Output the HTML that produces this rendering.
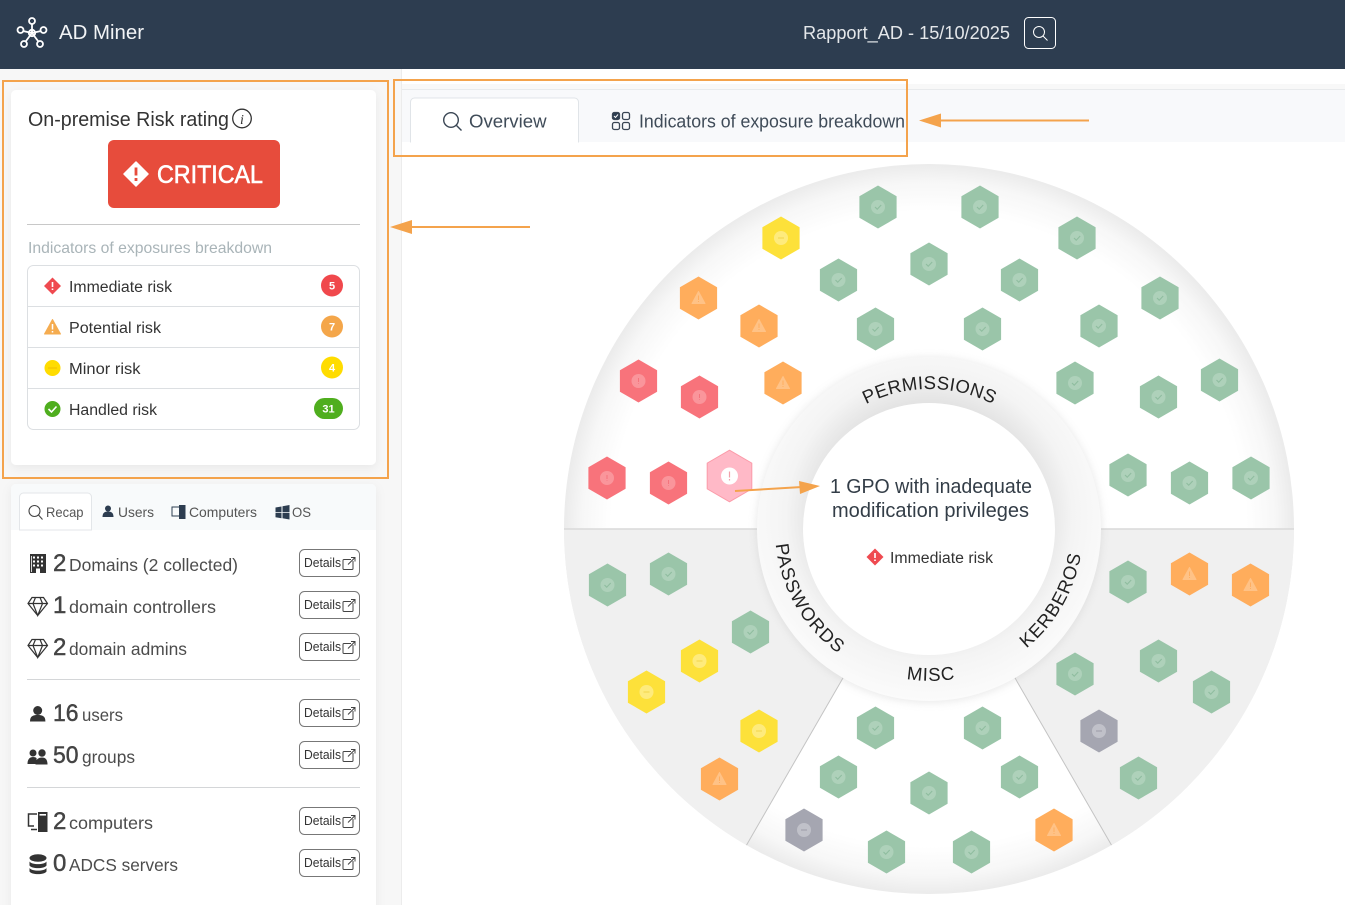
<!DOCTYPE html>
<html lang="en">
<head>
<meta charset="utf-8">
<title>AD Miner</title>
<style>
html,body{margin:0;padding:0;background:#fff;width:1345px;height:905px;overflow:hidden}
svg{display:block;position:absolute;left:0;top:0}
text{font-family:"Liberation Sans",sans-serif;fill:#333}
.lab{font-size:17.5px;fill:#4c4c4c}
.num{font-size:24px;fill:#444;stroke:#444;stroke-width:.45px}
.det{font-size:12.5px;fill:#333}
.row{font-size:15.5px;fill:#333}
.tab{font-size:14px;fill:#555}
.curve{font-size:18.5px;fill:#222}
.b{font-size:11px;font-weight:bold;fill:#fff}
</style>
</head>
<body>
<svg width="1345" height="905" viewBox="0 0 1345 905" xmlns="http://www.w3.org/2000/svg">
<defs>
<radialGradient id="disc" gradientUnits="userSpaceOnUse" cx="929" cy="529" r="365">
<stop offset="0" stop-color="#fff"/><stop offset=".87" stop-color="#fff"/><stop offset=".95" stop-color="#f7f7f7"/><stop offset="1" stop-color="#ebebeb"/>
</radialGradient>
<radialGradient id="ring" gradientUnits="userSpaceOnUse" cx="929" cy="517" r="184">
<stop offset=".61" stop-color="#e2e2e2"/><stop offset=".78" stop-color="#f4f4f4"/><stop offset="1" stop-color="#fbfbfb"/>
</radialGradient>
<filter id="soft" x="-20%" y="-20%" width="140%" height="140%"><feGaussianBlur stdDeviation="4"/></filter>
<filter id="cs" x="-10%" y="-10%" width="120%" height="120%"><feDropShadow dx="0" dy="3" stdDeviation="5" flood-color="#000" flood-opacity=".06"/></filter>
<polygon id="hx" points="0,-21.5 18.6,-10.75 18.6,10.75 0,21.5 -18.6,10.75 -18.6,-10.75"/>
<g id="hg"><use href="#hx" fill="#9ac5a9"/><circle r="7" fill="#aed1ba"/><path d="M-3,0l2.2,2.2L3.2,-2" fill="none" stroke="#8fbd9f" stroke-width="1.1"/></g>
<g id="hr"><use href="#hx" fill="#f8737b"/><circle r="7" fill="#fa959b"/><path d="M0,-3V1M0,2.4V3" stroke="#f4747d" stroke-width="1"/></g>
<g id="ho"><use href="#hx" fill="#ffad5c"/><path d="M0,-6.500L6.500,5.500H-6.500Z" fill="#ffc286" stroke="#ffc286" stroke-linejoin="round"/><path d="M0,-2.500V2M0,3V4" stroke="#ffae60" stroke-width="1"/></g>
<g id="hy"><use href="#hx" fill="#fde13a"/><circle r="7" fill="#feeb7d"/><path d="M-3,0H3" stroke="#f3d64a" stroke-width="1"/></g>
<g id="hk"><use href="#hx" fill="#a5a6b1"/><circle r="7" fill="#c0c1c9"/><path d="M-3,0H3" stroke="#9b9ca8" stroke-width="1"/></g>
<g id="ext" fill="none" stroke="#444" stroke-width="1"><path d="M353,561v7.500a1,1 0 0 1 -1,1h-8a1,1 0 0 1 -1,-1v-8a1,1 0 0 1 1,-1h7"/><path d="M348,564.500L355,557.500M351,557.500h4v4"/></g>
<path id="hp1" d="M789.500,529A140,140 0 0 1 1069.500,529"/>
<path id="hp2" d="M775,529A154,154 0 0 0 852,662.400"/>
<path id="hp3" d="M798,604A153.500,153.500 0 0 0 1064,604"/>
<path id="hp4" d="M1006,662.400A154,154 0 0 0 1083,529"/>
<path id="diam" d="M0,-8.500L8.500,0L0,8.500L-8.500,0Z"/>
</defs>

<!-- page backgrounds -->
<rect width="1345" height="905" fill="#fff"/>
<rect x="0" y="69" width="401" height="836" fill="#f7f7f7"/>
<rect x="401" y="69" width="1" height="836" fill="#ececec"/>
<rect x="402" y="89" width="943" height="53" fill="#f8f9fb"/>
<rect x="402" y="84" width="943" height="5" fill="#f8f8f8"/>
<rect x="402" y="89" width="943" height="1" fill="#e8eaec"/>

<!-- header -->
<rect width="1345" height="69" fill="#2d3d50"/>
<g fill="none" stroke="#fff" stroke-width="1.800">
<path d="M32,33V24M32,33L23,31M32,33L41,31M32,33L26,41M32,33L38,41"/>
<circle cx="32" cy="33" r="3.200" stroke-width="1.800"/>
<circle cx="32" cy="21" r="3"/><circle cx="20.500" cy="30" r="3"/><circle cx="43.500" cy="30" r="3"/><circle cx="24" cy="44" r="3"/><circle cx="40" cy="44" r="3"/>
</g>
<text x="59" y="39" font-size="20" textLength="85" lengthAdjust="spacingAndGlyphs" style="fill:#f2f4f6">AD Miner</text>
<text x="803" y="39" font-size="18" textLength="207" lengthAdjust="spacingAndGlyphs" style="fill:#e4e7ea">Rapport_AD - 15/10/2025</text>
<rect x="1024.500" y="17.500" width="31" height="31" rx="4" fill="none" stroke="#fff"/>
<g fill="none" stroke="#fff" stroke-width="1"><circle cx="1039" cy="32" r="5.500"/><path d="M1043,36l4.500,4.500"/></g>

<!-- left risk card -->
<rect x="11" y="90" width="365" height="375" rx="5" fill="#fff" filter="url(#cs)"/>
<text x="28" y="126" font-size="20" textLength="201" lengthAdjust="spacingAndGlyphs">On-premise Risk rating</text>
<circle cx="242" cy="118.500" r="9.300" fill="none" stroke="#333" stroke-width="1.300"/>
<text x="242" y="124" font-size="14" text-anchor="middle" font-style="italic" style="font-family:'Liberation Serif',serif">i</text>
<rect x="108" y="140" width="172" height="68" rx="6" fill="#e74c3c"/>
<path d="M136,162L148,174L136,186L124,174Z" fill="#fff" stroke="#fff" stroke-linejoin="round" stroke-width="1.500"/>
<path d="M136,167.500V175.500M136,178V181" stroke="#e74c3c" stroke-width="2.800"/>
<text x="157" y="183" font-size="25" textLength="106" lengthAdjust="spacingAndGlyphs" style="fill:#fff;stroke:#fff;stroke-width:.6px">CRITICAL</text>
<rect x="27" y="224" width="333" height="1" fill="#c8c8c8"/>
<text x="28" y="253" font-size="16" textLength="244" lengthAdjust="spacingAndGlyphs" style="fill:#a9b4b8">Indicators of exposures breakdown</text>
<rect x="27.500" y="265.500" width="332" height="164" rx="6" fill="#fff" stroke="#dcdfe2"/>
<path d="M28,306.500H359M28,347.500H359M28,388.500H359" stroke="#dcdfe2"/>
<use href="#diam" x="52.500" y="286" fill="#ef4a50"/>
<path d="M52.500,282V287M52.500,288.500V290" stroke="#fff" stroke-width="1.600"/>
<path d="M52.500,319.500L60.500,334H44.500Z" fill="#f5ac50" stroke="#f5ac50" stroke-linejoin="round"/>
<path d="M52.500,324V329.500M52.500,331V332.500" stroke="#fff" stroke-width="1.500"/>
<circle cx="52.500" cy="368" r="8" fill="#ffdc00"/><path d="M48,368H57" stroke="#f5c800" stroke-width="1.500"/>
<circle cx="52.500" cy="409" r="8" fill="#4fae1e"/><path d="M48.500,409l3,3l5,-5.500" fill="none" stroke="#fff" stroke-width="1.600"/>
<text class="row" x="69" y="292" textLength="103" lengthAdjust="spacingAndGlyphs">Immediate risk</text>
<text class="row" x="69" y="333" textLength="92" lengthAdjust="spacingAndGlyphs">Potential risk</text>
<text class="row" x="69" y="374" textLength="71.500" lengthAdjust="spacingAndGlyphs">Minor risk</text>
<text class="row" x="69" y="415" textLength="88" lengthAdjust="spacingAndGlyphs">Handled risk</text>
<circle cx="332" cy="285.500" r="11" fill="#f0484c"/><text class="b" x="332" y="289.500" text-anchor="middle">5</text>
<circle cx="332" cy="326.500" r="11" fill="#f4a64a"/><text class="b" x="332" y="330.500" text-anchor="middle">7</text>
<circle cx="332" cy="367.500" r="11" fill="#ffdc00"/><text class="b" x="332" y="371.500" text-anchor="middle">4</text>
<rect x="314" y="398" width="29" height="21" rx="10.500" fill="#4fae1e"/><text class="b" x="328.500" y="412.500" text-anchor="middle">31</text>

<!-- left recap card -->
<rect x="11" y="484" width="365" height="430" rx="5" fill="#fff" filter="url(#cs)"/>
<path d="M11,530V489a5,5 0 0 1 5,-5H371a5,5 0 0 1 5,5V530Z" fill="#f8fafb"/>
<path d="M19.500,530V497a4,4 0 0 1 4,-4H87.500a4,4 0 0 1 4,4V530Z" fill="#fff" stroke="#e3e6e9"/>
<g fill="none" stroke="#444" stroke-width="1.100"><circle cx="34.500" cy="511" r="5.500"/><path d="M38.500,515l4,4.500"/></g>
<text class="tab" x="46" y="517" textLength="37.500" lengthAdjust="spacingAndGlyphs">Recap</text>
<g fill="#2d3d50"><circle cx="108" cy="508.500" r="3"/><path d="M102.500,517c0,-4.500 2.500,-5.500 5.500,-5.500s5.500,1 5.500,5.500Z"/></g>
<text class="tab" x="118" y="517" textLength="36" lengthAdjust="spacingAndGlyphs">Users</text>
<rect x="172" y="507" width="9" height="9" fill="none" stroke="#2d3d50"/><rect x="179" y="505" width="6.500" height="14" fill="#2d3d50"/>
<text class="tab" x="189" y="517" textLength="68" lengthAdjust="spacingAndGlyphs">Computers</text>
<path d="M275.500,507.500l6,-1v5.500h-6ZM282.500,506.300l7,-1.300v7h-7ZM275.500,512.800h6v5.500l-6,-1ZM282.500,512.800h7v6.700l-7,-1.200Z" fill="#2d3d50"/>
<text class="tab" x="292" y="517" textLength="19" lengthAdjust="spacingAndGlyphs">OS</text>

<rect x="27" y="679" width="333" height="1" fill="#d4d6d8"/>
<rect x="27" y="787" width="333" height="1" fill="#d4d6d8"/>

<!-- row icons -->
<rect x="30" y="554" width="16" height="19" fill="#333"/>
<g fill="#fff"><rect x="33" y="556.500" width="2" height="2"/><rect x="37" y="556.500" width="2" height="2"/><rect x="41" y="556.500" width="2" height="2"/><rect x="33" y="560.500" width="2" height="2"/><rect x="37" y="560.500" width="2" height="2"/><rect x="41" y="560.500" width="2" height="2"/><rect x="33" y="564.500" width="2" height="2"/><rect x="37" y="564.500" width="2" height="2"/><rect x="41" y="564.500" width="2" height="2"/><rect x="31.200" y="556" width="0.800" height="16"/><rect x="36" y="568.500" width="4" height="4.500"/></g>
<g fill="none" stroke="#333" stroke-width="1.200"><path d="M32,597.500H43.500L47.500,603.500L37.700,615.500L28,603.500ZM28,603.500H47.500M33,603.500L37.700,615.500L42.500,603.500M33,603.500L35.500,597.500M42.500,603.500L40,597.500"/>
<path d="M32,639.500H43.500L47.500,645.500L37.700,657.500L28,645.500ZM28,645.500H47.500M33,645.500L37.700,657.500L42.500,645.500M33,645.500L35.500,639.500M42.500,645.500L40,639.500"/></g>
<g fill="#333"><circle cx="37.700" cy="710.500" r="4.500"/><path d="M30,721.500c0,-5.500 3,-6.500 7.700,-6.500s7.700,1 7.700,6.500Z"/>
<circle cx="33" cy="753" r="3.500"/><circle cx="42" cy="753" r="3.700"/><path d="M27.500,764c0,-5 2.500,-7 5.500,-7c1.500,0 3,.4 3.600,1.200v5.800ZM35.500,764.500c0,-5 3,-7 6.500,-7s5.500,2 5.500,7Z"/></g>
<path d="M37,814H28.500V826H34M31,829.500H37" fill="none" stroke="#333" stroke-width="1.500"/>
<rect x="38" y="812" width="9.500" height="20" fill="#333"/><rect x="39.500" y="814" width="6.500" height="1.600" fill="#fff"/>
<g fill="#333"><ellipse cx="38" cy="858" rx="8.500" ry="3.800"/><path d="M29.500,861.500c2,3.500 15,3.500 17,0v4c-2,3.500 -15,3.500 -17,0Z"/><path d="M29.500,868c2,3.500 15,3.500 17,0v3.500c-2,3.500 -15,3.500 -17,0Z"/></g>

<!-- row text -->
<text class="num" x="53" y="571">2</text><text class="lab" x="69" y="571" textLength="169" lengthAdjust="spacingAndGlyphs">Domains (2 collected)</text>
<text class="num" x="53" y="613">1</text><text class="lab" x="69" y="613" textLength="147" lengthAdjust="spacingAndGlyphs">domain controllers</text>
<text class="num" x="53" y="655">2</text><text class="lab" x="69" y="655" textLength="118" lengthAdjust="spacingAndGlyphs">domain admins</text>
<text class="num" x="53" y="721" textLength="25.500" lengthAdjust="spacingAndGlyphs">16</text><text class="lab" x="82" y="721" textLength="41" lengthAdjust="spacingAndGlyphs">users</text>
<text class="num" x="53" y="763" textLength="25.500" lengthAdjust="spacingAndGlyphs">50</text><text class="lab" x="82" y="763" textLength="53" lengthAdjust="spacingAndGlyphs">groups</text>
<text class="num" x="53" y="829">2</text><text class="lab" x="69" y="829" textLength="84" lengthAdjust="spacingAndGlyphs">computers</text>
<text class="num" x="53" y="871">0</text><text class="lab" x="69" y="871" textLength="109" lengthAdjust="spacingAndGlyphs">ADCS servers</text>

<!-- details buttons -->
<g fill="#fff" stroke="#777"><rect x="299.500" y="549.500" width="60" height="27" rx="5"/><rect x="299.500" y="591.500" width="60" height="27" rx="5"/><rect x="299.500" y="633.500" width="60" height="27" rx="5"/><rect x="299.500" y="699.500" width="60" height="27" rx="5"/><rect x="299.500" y="741.500" width="60" height="27" rx="5"/><rect x="299.500" y="807.500" width="60" height="27" rx="5"/><rect x="299.500" y="849.500" width="60" height="27" rx="5"/></g>
<text class="det" x="304" y="567" textLength="37" lengthAdjust="spacingAndGlyphs">Details</text><use href="#ext"/>
<text class="det" x="304" y="609" textLength="37" lengthAdjust="spacingAndGlyphs">Details</text><use href="#ext" y="42"/>
<text class="det" x="304" y="651" textLength="37" lengthAdjust="spacingAndGlyphs">Details</text><use href="#ext" y="84"/>
<text class="det" x="304" y="717" textLength="37" lengthAdjust="spacingAndGlyphs">Details</text><use href="#ext" y="150"/>
<text class="det" x="304" y="759" textLength="37" lengthAdjust="spacingAndGlyphs">Details</text><use href="#ext" y="192"/>
<text class="det" x="304" y="825" textLength="37" lengthAdjust="spacingAndGlyphs">Details</text><use href="#ext" y="258"/>
<text class="det" x="304" y="867" textLength="37" lengthAdjust="spacingAndGlyphs">Details</text><use href="#ext" y="300"/>

<!-- main tabs -->
<path d="M410.500,142V102a4,4 0 0 1 4,-4H574.500a4,4 0 0 1 4,4V142Z" fill="#fff" stroke="#e0e4e8"/>
<rect x="411" y="140" width="167" height="3" fill="#fff"/>
<g fill="none" stroke="#3a4654" stroke-width="1.400"><circle cx="451" cy="120" r="7.300"/><path d="M456.500,125.500L461.500,130.500"/></g>
<text x="469" y="127.500" font-size="18" textLength="77.500" lengthAdjust="spacingAndGlyphs" style="fill:#3f4b58">Overview</text>
<g fill="none" stroke="#3a4654" stroke-width="1.300"><rect x="612.500" y="112.500" width="7" height="7" rx="1.800" fill="#2d3d50"/><rect x="622.500" y="112.500" width="7" height="7" rx="1.800"/><rect x="612.500" y="122.500" width="7" height="7" rx="1.800"/><rect x="622.500" y="122.500" width="7" height="7" rx="1.800"/></g>
<path d="M614,116l1.500,1.500l2.500,-3" fill="none" stroke="#fff" stroke-width="1"/>
<text x="639" y="127.500" font-size="18" textLength="266" lengthAdjust="spacingAndGlyphs" style="fill:#3f4b58">Indicators of exposure breakdown</text>

<!-- wheel -->
<circle cx="929" cy="529" r="365" fill="url(#disc)"/>
<path d="M564,529A365,365 0 0 0 746.500,845.100L929,529Z" fill="#f0f0f0"/>
<path d="M1294,529A365,365 0 0 1 1111.500,845.100L929,529Z" fill="#f0f0f0"/>
<path d="M564,529H757M1101,529H1294" stroke="#d9d9d9" stroke-width="1.500"/>
<path d="M746.500,845.100L929,529L1111.500,845.100" fill="none" stroke="#c4c4c4" stroke-width="1"/>
<circle cx="929" cy="530" r="173" fill="#bbb" opacity=".3" filter="url(#soft)"/>
<circle cx="929" cy="529" r="172" fill="url(#ring)"/>
<circle cx="929" cy="529" r="126" fill="#fff"/>
<text class="curve" letter-spacing=".3"><textPath href="#hp1" startOffset="50%" text-anchor="middle">PERMISSIONS</textPath></text>
<text class="curve" letter-spacing="1.300"><textPath href="#hp2" startOffset="50%" text-anchor="middle">PASSWORDS</textPath></text>
<text class="curve" letter-spacing=".8"><textPath href="#hp3" startOffset="50%" text-anchor="middle">MISC</textPath></text>
<text class="curve" letter-spacing="1.100"><textPath href="#hp4" startOffset="50%" text-anchor="middle">KERBEROS</textPath></text>

<text x="830" y="493" font-size="20.500" textLength="202" lengthAdjust="spacingAndGlyphs" style="fill:#333d47">1 GPO with inadequate</text>
<text x="832" y="517" font-size="20.500" textLength="197" lengthAdjust="spacingAndGlyphs" style="fill:#333d47">modification privileges</text>
<use href="#diam" x="875" y="557" fill="#ef4a50"/>
<path d="M875,553V558M875,559.500V561" stroke="#fff" stroke-width="1.600"/>
<text class="row" x="890" y="563" textLength="103" lengthAdjust="spacingAndGlyphs">Immediate risk</text>

<!-- hexagons: top half -->
<use href="#hg" x="878" y="207"/><use href="#hg" x="980" y="207"/><use href="#hg" x="1077" y="238"/><use href="#hg" x="929" y="264"/><use href="#hg" x="838.500" y="280"/><use href="#hg" x="1019.500" y="280"/><use href="#hg" x="1160" y="298"/><use href="#hg" x="875.500" y="329"/><use href="#hg" x="982.500" y="329"/><use href="#hg" x="1099" y="326"/><use href="#hg" x="1075" y="383"/><use href="#hg" x="1158.500" y="397"/><use href="#hg" x="1219.500" y="380"/><use href="#hg" x="1128" y="475"/><use href="#hg" x="1189.500" y="483"/><use href="#hg" x="1251" y="478"/>
<use href="#hy" x="781" y="238"/>
<use href="#ho" x="698.500" y="298"/><use href="#ho" x="759" y="326"/><use href="#ho" x="783" y="383"/>
<use href="#hr" x="638.500" y="381"/><use href="#hr" x="699.500" y="397"/><use href="#hr" x="607" y="478"/><use href="#hr" x="668.500" y="483"/>
<g transform="translate(729.500,476) scale(1.200)"><use href="#hx" fill="#ffb9c7" stroke="#fb9aa8" stroke-width=".8"/></g>
<circle cx="729.500" cy="476" r="8.500" fill="#fff"/><path d="M729.500,471.500V477.500M729.500,479V480.500" stroke="#f2a0aa" stroke-width="1.200"/>
<!-- passwords -->
<use href="#hg" x="607.500" y="585"/><use href="#hg" x="668.500" y="574"/><use href="#hg" x="750.500" y="632"/>
<use href="#hy" x="699.500" y="661"/><use href="#hy" x="646.500" y="692"/><use href="#hy" x="759" y="731"/>
<use href="#ho" x="719.500" y="779"/>
<!-- misc -->
<use href="#hg" x="875.500" y="728"/><use href="#hg" x="982.500" y="728"/><use href="#hg" x="838.500" y="777"/><use href="#hg" x="1019.500" y="777"/><use href="#hg" x="929" y="793"/><use href="#hg" x="886.500" y="852"/><use href="#hg" x="971.500" y="852"/>
<use href="#hk" x="804" y="830"/><use href="#ho" x="1054" y="830"/>
<!-- kerberos -->
<use href="#hg" x="1128" y="582"/><use href="#hg" x="1075" y="674"/><use href="#hg" x="1158.500" y="661"/><use href="#hg" x="1211.500" y="692"/><use href="#hg" x="1138.500" y="778"/>
<use href="#ho" x="1189.500" y="574"/><use href="#ho" x="1250.500" y="585"/>
<use href="#hk" x="1099" y="731"/>

<!-- annotations -->
<g fill="none" stroke="#f4a34c" stroke-width="2">
<rect x="3" y="81" width="385" height="397"/>
<rect x="394" y="80" width="513" height="76"/>
<path d="M410,227H530M938,120.500H1089"/>
<path d="M735,491L802,487"/>
</g>
<g fill="#f4a34c">
<path d="M390,227L412,220V234Z"/>
<path d="M919,120.500L941,113.500V127.500Z"/>
<path d="M820,486L799,481L800,494Z"/>
</g>
</svg>
</body>
</html>
